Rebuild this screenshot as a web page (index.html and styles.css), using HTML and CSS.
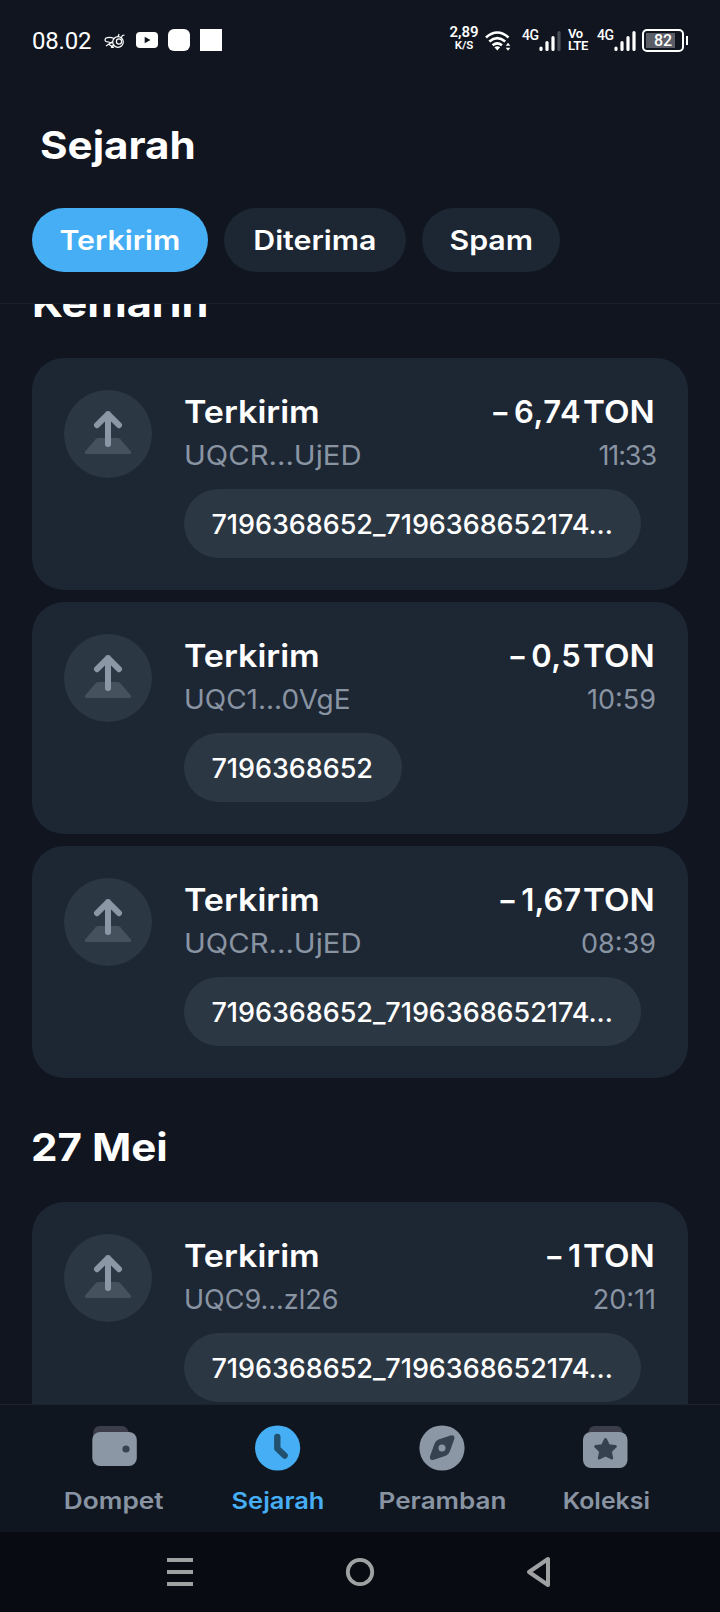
FILE: index.html
```html
<!DOCTYPE html>
<html lang="id">
<head>
<meta charset="utf-8">
<title>Sejarah</title>
<link rel="stylesheet" href="styles.css">
</head>
<body>
<svg width="0" height="0" class="defs">
  <symbol id="send" viewBox="0 0 88 88">
    <path d="M35 48h18q2 0 3.300 1.300L67 61.500q1 2.500-1.500 2.500h-43q-2.500 0-1.500-2.500l10.700-12.200Q33 48 35 48z" fill="#46515e"/>
    <path d="M44 54V24M33 35.200l11-11 11 11" fill="none" stroke="#8c97a5" stroke-width="6" stroke-linecap="round" stroke-linejoin="round"/>
  </symbol>
</svg>
<div class="phone">
  <div class="status">
    <div class="status-left">
      <span class="clock">08.02</span>
      <svg class="bee" width="21" height="16" viewBox="0 0 21 16" fill="none" stroke="#fff" stroke-width="1.200">
        <circle cx="14" cy="9" r="5.300"/><circle cx="15" cy="8.500" r="2.600"/>
        <path d="M10 5.500Q6 3.500 2 5 0 7 2 8.500L8.500 10M8.800 8.500L2 13M5 11.500l5 3M7 14.500l3-3M14 4l1-3M17 5l1.500-2.500 2-.5"/>
      </svg>
      <svg class="tube" width="22" height="16" viewBox="0 0 22 16"><rect width="22" height="16" rx="4" fill="#fff"/><path d="M8.700 4.700v6.600l5.800-3.300z" fill="#10151f"/></svg>
      <i class="blob round"></i>
      <i class="blob"></i>
    </div>
    <div class="status-right">
      <div class="speed"><b>2,89</b><small>K/S</small></div>
      <svg class="wifi" width="26" height="20" viewBox="0 0 26 20" fill="none" stroke="#fff" stroke-width="2.600">
        <path d="M1 6.500Q12.300-3.500 23.500 6.500M4.300 10.500Q12.300 3.800 20.200 10.500M7.600 14.200Q12.300 10.500 17 14.200"/>
        <path d="M9.400 16.200q2.900-2 5.800 0l-2.900 3.200z" fill="#fff" stroke="none"/>
        <path d="M23 11.700l2.300 3h-4.600zM23 19.700l2.300-3h-4.600z" fill="#fff" stroke="none"/>
      </svg>
      <span class="net">4G</span>
      <svg class="bars" width="22" height="22" viewBox="0 0 22 22" stroke="#fff" stroke-width="3.200" stroke-linecap="round"><path d="M2 19.500v-1.500M8 19.500v-7M14 19.500v-12"/><path d="M20 19.500v-17" stroke="#4b4f58"/></svg>
      <div class="volte"><span>Vo</span><span>LTE</span></div>
      <span class="net">4G</span>
      <svg class="bars" width="22" height="22" viewBox="0 0 22 22" stroke="#fff" stroke-width="3.200" stroke-linecap="round"><path d="M2 19.500v-1.500M8 19.500v-7M14 19.500v-12M20 19.500v-17"/></svg>
      <div class="battery"><span>82</span></div><i class="tip"></i>
    </div>
  </div>

  <header class="header">
    <h1>Sejarah</h1>
    <div class="tabs">
      <div class="tab sent active"><span>Terkirim</span></div>
      <div class="tab received"><span>Diterima</span></div>
      <div class="tab spam"><span>Spam</span></div>
    </div>
  </header>

  <main class="list">
    <h2 class="day first">Kemarin</h2>
    <div class="cards">
      <article class="card">
        <div class="icon"><svg width="88" height="88"><use href="#send"/></svg></div>
        <div class="body">
          <div class="row top"><span class="kind">Terkirim</span><span class="amount"><i>−</i><span class="n674">6,74</span><em>TON</em></span></div>
          <div class="row sub"><span class="a-ujed">UQCR...UjED</span><span class="t1133">11:33</span></div>
          <div class="memo">7196368652_7196368652174...</div>
        </div>
      </article>
      <article class="card">
        <div class="icon"><svg width="88" height="88"><use href="#send"/></svg></div>
        <div class="body">
          <div class="row top"><span class="kind">Terkirim</span><span class="amount"><i>−</i><span class="n05">0,5</span><em>TON</em></span></div>
          <div class="row sub"><span class="a-vge">UQC1...0VgE</span><span>10:59</span></div>
          <div class="memo short">7196368652</div>
        </div>
      </article>
      <article class="card">
        <div class="icon"><svg width="88" height="88"><use href="#send"/></svg></div>
        <div class="body">
          <div class="row top"><span class="kind">Terkirim</span><span class="amount"><i>−</i><span>1,67</span><em>TON</em></span></div>
          <div class="row sub"><span class="a-ujed">UQCR...UjED</span><span>08:39</span></div>
          <div class="memo">7196368652_7196368652174...</div>
        </div>
      </article>
    </div>
    <h2 class="day second">27 Mei</h2>
    <div class="cards">
      <article class="card">
        <div class="icon"><svg width="88" height="88"><use href="#send"/></svg></div>
        <div class="body">
          <div class="row top"><span class="kind">Terkirim</span><span class="amount"><i>−</i><span>1</span><em>TON</em></span></div>
          <div class="row sub"><span>UQC9...zl26</span><span class="t2011">20:11</span></div>
          <div class="memo">7196368652_7196368652174...</div>
        </div>
      </article>
    </div>
  </main>

  <nav class="nav">
    <div class="item">
      <svg width="48" height="48" viewBox="0 0 48 48"><path d="M3 12Q3 3 10 3h22q5 0 7 7v8H3z" fill="#3b3e4a"/><rect x="2.300" y="9" width="44.500" height="34" rx="8" fill="#8c97a5"/><circle cx="36" cy="26" r="3.600" fill="#36424f"/></svg>
      <span class="dompet">Dompet</span>
    </div>
    <div class="item on">
      <svg width="48" height="48" viewBox="0 0 48 48"><circle cx="23.600" cy="25" r="22.600" fill="#45aef5"/><path d="M23.300 14v11.500l7.300 7" fill="none" stroke="#22506f" stroke-width="6.400" stroke-linecap="round" stroke-linejoin="round"/></svg>
      <span class="sejarah">Sejarah</span>
    </div>
    <div class="item">
      <svg width="48" height="48" viewBox="0 0 48 48"><circle cx="24" cy="25" r="22.600" fill="#8c97a5"/><path d="M20.500 16.500l12-4q4.600-1 3.800 3.500l-4.500 12.500q-1 3-4 4.200l-12 4q-4.600 1-3.800-3.500l4.500-12.500q1-3 4-4.200z" fill="#36424f"/><circle cx="24" cy="25" r="3.500" fill="#8c97a5"/></svg>
      <span class="peramban">Peramban</span>
    </div>
    <div class="item">
      <svg width="48" height="48" viewBox="0 0 48 48"><path d="M6.500 9q1-6 6-6h22q5 0 6 6z" fill="#3b3e4a"/><rect x="1" y="9" width="44.500" height="36" rx="8" fill="#8c97a5"/><path d="M23.500 16.500l3 6.200 6.800.8-5 4.800 1.400 6.700-6.200-3.200-6.200 3.200 1.400-6.700-5-4.800 6.800-.8z" fill="#36424f" stroke="#36424f" stroke-width="3" stroke-linejoin="round"/></svg>
      <span class="koleksi">Koleksi</span>
    </div>
  </nav>

  <div class="system">
    <svg width="30" height="34" viewBox="0 0 30 34"><path d="M2 5h26M2 17h26M2 29h26" stroke="#a0a1a3" stroke-width="4"/></svg>
    <svg width="30" height="34" viewBox="0 0 30 34"><circle cx="15" cy="17" r="12.200" fill="none" stroke="#a0a1a3" stroke-width="3.800"/></svg>
    <svg width="30" height="34" viewBox="0 0 30 34"><path d="M23 4v26L4 17z" fill="none" stroke="#a0a1a3" stroke-width="4" stroke-linejoin="round"/></svg>
  </div>
</div>
</body>
</html>
```

FILE: styles.css
```css
* { box-sizing: border-box; margin: 0; padding: 0; }
body { background: #10151f; }
i, em { font-style: normal; }
svg { display: block; flex: none; }
.defs { position: absolute; }

.phone {
  width: 720px; height: 1612px; overflow: hidden;
  display: flex; flex-direction: column;
  background: #10151f; color: #fff;
  font-family: Inter, "Open Sans", sans-serif;
}

/* Status bar */
.status {
  height: 80px; flex: none; padding: 0 32px;
  display: flex; justify-content: space-between; align-items: center;
  font-family: Roboto, sans-serif;
}
.status-left, .status-right { display: flex; align-items: center; height: 32px; }
.clock { font-size: 24px; line-height: 32px; letter-spacing: -.2px; margin-top: 2px; }
.bee { margin-left: 13px; margin-top: 2px; }
.tube { margin-left: 11px; }
.blob { width: 22px; height: 22px; background: #fff; margin-left: 10px; }
.blob.round { border-radius: 6px; }
.speed { display: flex; flex-direction: column; align-items: center; width: 28px; margin-top: -3px; }
.speed b { font-size: 15px; line-height: 13px; font-weight: 600; }
.speed small { font-size: 11.500px; line-height: 12px; font-weight: 600; }
.wifi { margin-left: 7px; margin-top: 1px; }
.net { font-size: 14px; line-height: 14px; font-weight: 500; margin: -11px 0 0 11px; width: 17px; letter-spacing: -.5px; }
.bars { margin-top: 1px; }
.volte { display: flex; flex-direction: column; font-size: 13px; line-height: 12px; font-weight: 600; margin-left: 7px; width: 22px; letter-spacing: -.3px; }
.volte + .net { margin-left: 7px; }
.battery {
  width: 42px; height: 23px; margin-left: 6px; padding: 2px; flex: none;
  border: 2px solid #fff; border-radius: 5px;
  display: flex; align-items: center; justify-content: center;
  background: linear-gradient(#5b5e66, #5b5e66) 2px 2px / 29px 15px no-repeat;
  font-size: 16px; font-weight: 500;
}
.tip { width: 2px; height: 9px; background: #fff; margin-left: 2px; }

/* Header */
.header { height: 224px; flex: none; padding-top: 45px; border-bottom: 1px solid #1b202a; }
h1 { font-size: 38.500px; line-height: 40px; font-weight: 700; margin-left: 40px; transform: scaleX(1.094); transform-origin: left; width: 200px; }
.tabs { display: flex; gap: 16px; padding: 43px 32px 0; }
.tab {
  height: 64px; border-radius: 32px; background: #1d2633; padding-top: 1px;
  font-size: 27px; font-weight: 600; line-height: 64px; text-align: center;
}
.tab span { display: inline-block; transform: scaleX(1.123); }
.sent { width: 176px; }
.received { width: 182px; }
.spam { width: 138px; }
.tab.active { background: #45aef5; }

/* Transactions */
.list { flex: 1; min-height: 0; overflow: hidden; padding: 0 32px; }
.day { font-size: 38.500px; line-height: 40px; font-weight: 700; transform-origin: left; width: 300px; }
.first { margin: -21px 0 35px 0; transform: scaleX(1.124); }
.second { margin: 49px 0 35px -1px; transform: scaleX(1.094); }
.cards { display: flex; flex-direction: column; gap: 12px; }
.card { height: 232px; flex: none; display: flex; gap: 32px; padding: 32px; border-radius: 32px; background: #1d2633; }
.icon { width: 88px; height: 88px; flex: none; border-radius: 50%; background: #2c3744; }
.body { flex: 1; min-width: 0; }
.row { display: flex; justify-content: space-between; white-space: nowrap; }
.top { font-size: 31px; line-height: 44px; font-weight: 600; }
.kind { transform: scaleX(1.099); transform-origin: left; }
.amount { display: flex; }
.amount i { font-size: 29px; margin-right: 4px; }
.amount em { margin: 0 1px 0 7px; transform: scaleX(1.073); transform-origin: right; }
.n674 { letter-spacing: .6px; }
.n05 { letter-spacing: .4px; }
.sub { font-size: 27px; line-height: 42px; color: #8994a3; padding-top: 1px; }
.a-ujed, .a-vge { transform-origin: left; }
.a-ujed { transform: scaleX(1.086); }
.a-vge { transform: scaleX(1.035); }
.t1133 { letter-spacing: -1.100px; }
.memo {
  width: 457px; height: 69px; margin-top: 12px; padding: 1px 0 0 27.500px;
  border-radius: 35px; background: #2c3744;
  font-size: 27px; line-height: 69px; font-weight: 500; white-space: nowrap; letter-spacing: -.05px;
}
.memo.short { width: 218px; }

/* Bottom navigation */
.nav { height: 128px; flex: none; padding: 18px 32px 0; border-top: 1px solid #1b222d; background: #10161f; display: flex; }
.item { width: 164px; display: flex; flex-direction: column; align-items: center; color: #8994a3; font-size: 23px; font-weight: 600; }
.item span { line-height: 30px; margin-top: 15px; }
.item.on { color: #45aef5; }
.dompet { transform: scaleX(1.141); }
.sejarah { transform: scaleX(1.105); }
.peramban { transform: scaleX(1.132); }
.koleksi { transform: scaleX(1.081); }
.system { height: 80px; flex: none; background: #080c12; display: flex; justify-content: space-between; align-items: center; padding: 0 165px; }
```
